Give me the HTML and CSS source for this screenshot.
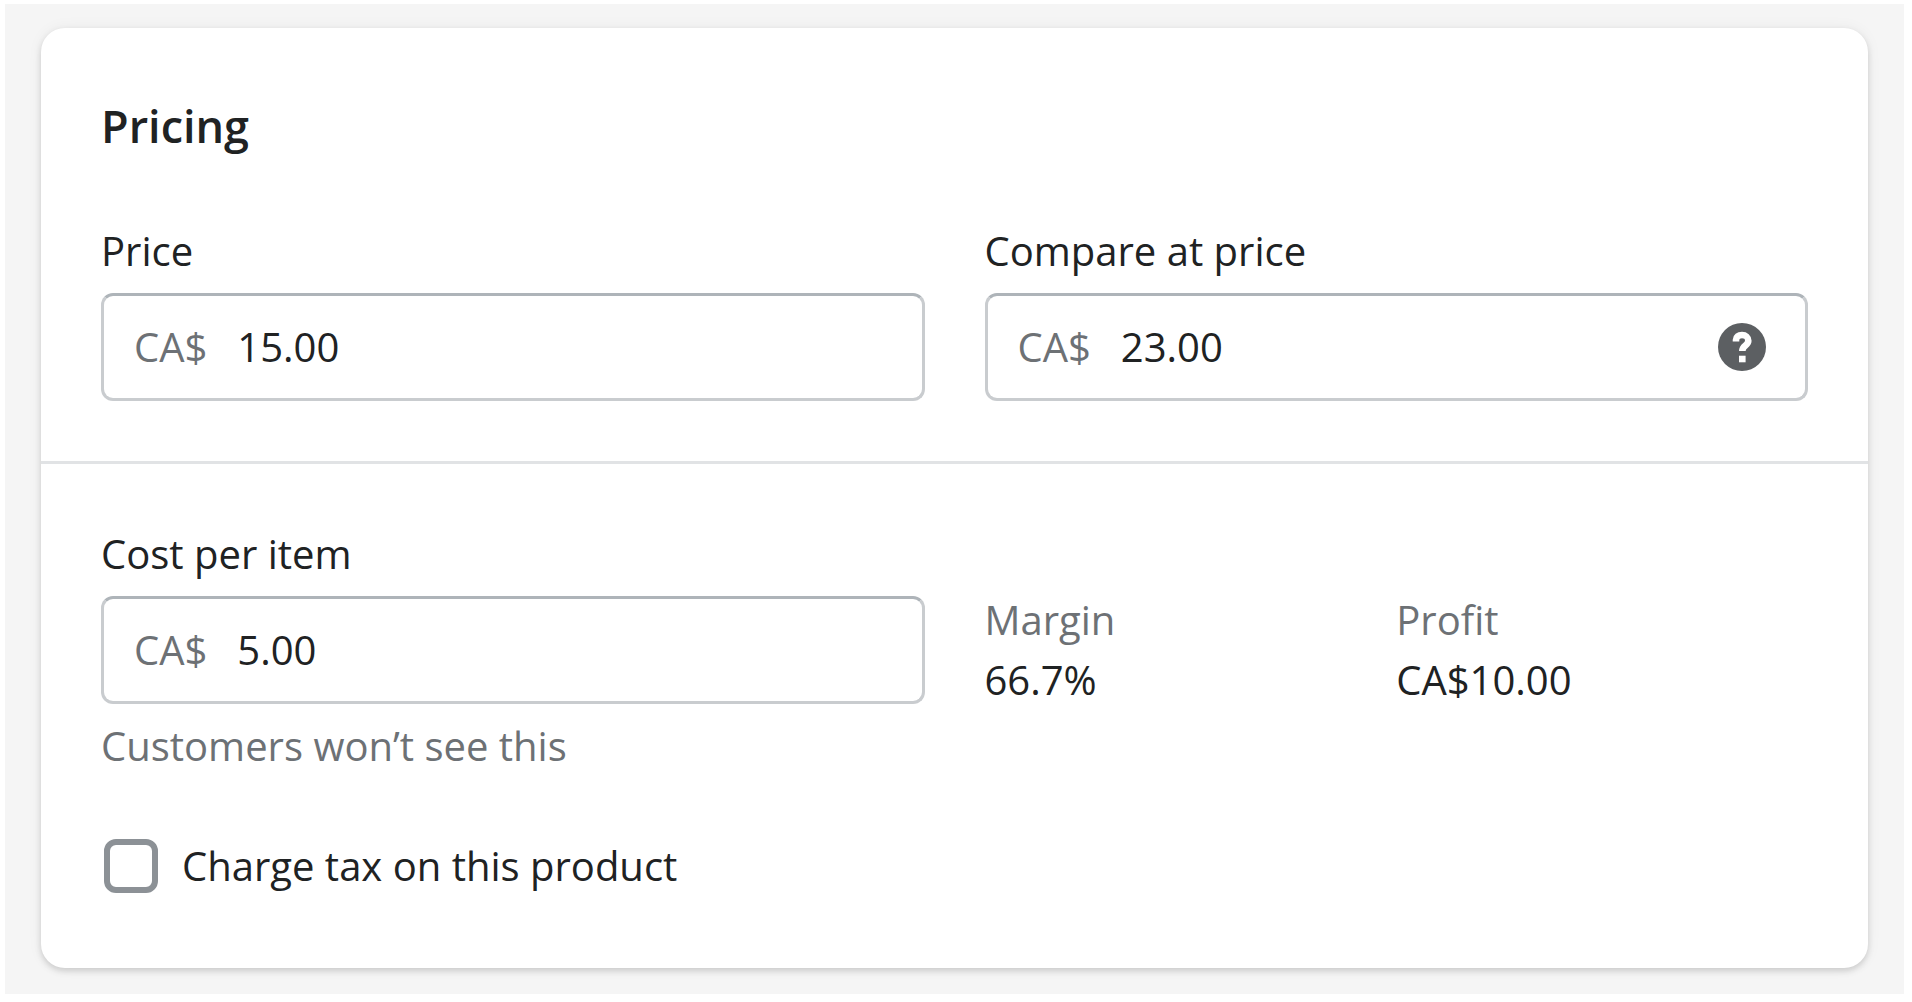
FILE: index.html
```html
<!DOCTYPE html>
<html lang="en">
<head>
    <meta charset="UTF-8">
    <meta name="viewport" content="width=device-width, initial-scale=1.0">
    <title>Pricing</title>
    <link rel="stylesheet" href="styles.css">
</head>
<body>
    <main class="page">
        <form class="card">
            <section class="card-section">
                <h2>Pricing</h2>
                <div class="row">
                    <div class="field">
                        <label for="price">Price</label>
                        <div class="input-box">
                            <span class="prefix">CA$</span>
                            <input type="text" id="price" value="15.00">
                        </div>
                    </div>
                    <div class="field">
                        <label for="comparePrice">Compare at price</label>
                        <div class="input-box">
                            <span class="prefix">CA$</span>
                            <input type="text" id="comparePrice" value="23.00">
                            <button type="button" class="help" aria-label="About compare at price">
                                <svg viewBox="0 0 20 20" aria-hidden="true">
                                    <circle cx="10" cy="10" r="8" fill="#5c5f62"/>
                                    <path d="M8 8.2V7.6C8 6.6 8.8 6 10 6s2.1.8 2.1 1.9c0 1.6-2 1.6-2 3.4" fill="none" stroke="#fff" stroke-width="2.2"/>
                                    <path d="M9 12.9h2.2v2.2H9z" fill="#fff"/>
                                </svg>
                            </button>
                        </div>
                    </div>
                </div>
            </section>

            <section class="card-section">
                <div class="row">
                    <div class="field">
                        <label for="cost">Cost per item</label>
                        <div class="input-box">
                            <span class="prefix">CA$</span>
                            <input type="text" id="cost" value="5.00" aria-describedby="costHint">
                        </div>
                        <p class="hint" id="costHint">Customers won’t see this</p>
                    </div>
                    <dl class="stats">
                        <div>
                            <dt>Margin</dt>
                            <dd>66.7%</dd>
                        </div>
                        <div>
                            <dt>Profit</dt>
                            <dd>CA$10.00</dd>
                        </div>
                    </dl>
                </div>
                <label class="choice" for="chargeTax">
                    <input type="checkbox" id="chargeTax">
                    <span>Charge tax on this product</span>
                </label>
            </section>
        </form>
    </main>
</body>
</html>
```

FILE: styles.css
```css
* {
    box-sizing: border-box;
    margin: 0;
    padding: 0;
}

body {
    background: #fff;
    padding: 4px 8px 8px 5px;
    color: #202223;
    font-family: "Open Sans", "Noto Sans", sans-serif;
    font-size: 40px;
    line-height: 60px;
}

.page {
    background: #f5f5f5;
    padding: 24px 36px 26px;
}

.card {
    background: #fff;
    border-radius: 24px;
    box-shadow: 0 0 15px rgba(23, 24, 24, 0.05), 0 3px 6px rgba(0, 0, 0, 0.15);
}

.card-section {
    padding: 60px;
}

.card-section + .card-section {
    border-top: 3px solid #e1e3e5;
}

h2 {
    margin-bottom: 57px;
    font-size: 45px;
    font-weight: 600;
    line-height: 76px;
}

.row {
    display: grid;
    grid-template-columns: 1fr 1fr;
    align-items: center;
    gap: 60px;
}

.field label {
    display: block;
    margin-bottom: 12px;
}

.input-box {
    display: flex;
    align-items: center;
    height: 108px;
    padding: 0 33px 0 30px;
    border: 3px solid #c9cccf;
    border-top-color: #aeb4b9;
    border-radius: 12px;
}

.input-box input {
    flex: 1;
    min-width: 0;
    border: none;
    outline: none;
    background: none;
    color: inherit;
    font: inherit;
}

.input-box:focus-within {
    border-color: #458fff;
}

.prefix {
    margin-right: 30px;
    color: #6d7175;
}

.help {
    width: 60px;
    height: 60px;
    border: none;
    background: none;
    cursor: pointer;
}

.help svg {
    display: block;
}

.hint {
    margin-top: 12px;
    color: #6d7175;
}

.stats {
    display: grid;
    grid-template-columns: 1fr 1fr;
}

.stats dt {
    color: #6d7175;
}

.choice {
    display: flex;
    align-items: center;
    gap: 24px;
    margin-top: 48px;
    padding: 12px 3px;
}

.choice input {
    appearance: none;
    width: 54px;
    height: 54px;
    border: 6px solid #8c9196;
    border-radius: 12px;
    background: #fff;
}

.choice input:checked {
    background: #008060;
}
```
